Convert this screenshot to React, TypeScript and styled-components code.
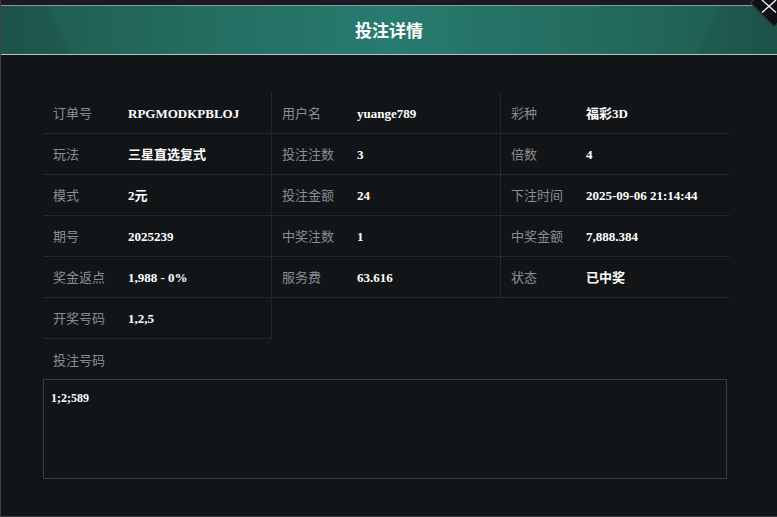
import * as React from "react";
import styled, { createGlobalStyle } from "styled-components";

const GlobalStyle = createGlobalStyle`
  html, body {
    margin: 0;
    padding: 0;
    background: #121518;
  }
  * {
    box-sizing: border-box;
  }
`;

const Modal = styled.div`
  position: relative;
  width: 777px;
  height: 517px;
  overflow: hidden;
  display: flex;
  flex-direction: column;
  background: #121518;
  border-left: 1px solid #3c4146;
  border-bottom: 1px solid #3c4146;
  font-family: "Noto Sans CJK SC", "Noto Sans", sans-serif;
`;

const TopStrip = styled.div`
  height: 6px;
  background: #1a1923;
  border-bottom: 1px solid #8e9898;
`;

const Header = styled.div`
  position: relative;
  height: 49px;
  display: flex;
  align-items: center;
  justify-content: center;
  border-bottom: 1px solid #b9c4c3;
  background: linear-gradient(90deg, #1f594e 0%, #236a5e 22%, #287b6f 50%, #236a5e 78%, #1f594e 100%);

  &::before,
  &::after {
    content: "";
    position: absolute;
    top: 0;
    bottom: 0;
    width: 90px;
    background: rgba(0, 0, 0, 0.06);
  }

  &::before {
    left: 0;
    clip-path: polygon(0 0, 45px 0, 70px 100%, 0 100%);
  }

  &::after {
    right: 0;
    clip-path: polygon(100% 0, 33px 0, 10px 100%, 100% 100%);
  }
`;

const Title = styled.h1`
  position: relative;
  z-index: 1;
  margin: 0 0 2px;
  color: #ffffff;
  font-size: 17px;
  font-weight: 700;
`;

const CloseButton = styled.div`
  position: absolute;
  top: -14px;
  right: -14px;
  width: 34px;
  height: 34px;
  background: #0e0f12;
  border: 1px solid #3a3f44;
  transform: rotate(45deg);
`;

const CloseIcon = styled.svg`
  position: absolute;
  top: 0;
  right: 0;
  width: 16px;
  height: 13px;
`;

const Body = styled.div`
  padding: 38px 46px 0 42px;
  display: flex;
  flex-direction: column;
`;

const Grid = styled.div`
  display: grid;
  grid-template-columns: repeat(3, 229px);
`;

const Cell = styled.div<{ $last?: boolean }>`
  height: 41px;
  display: flex;
  align-items: baseline;
  line-height: 40px;
  padding-left: 10px;
  border-bottom: 1px dotted #34393d;
  border-right: ${(p) => (p.$last ? "none" : "1px dotted #34393d")};
`;

const Label = styled.span`
  width: 75px;
  flex-shrink: 0;
  color: #8b8e91;
  font-size: 13px;
`;

const Value = styled.span`
  color: #ffffff;
  font-family: "Liberation Serif", "Noto Sans CJK SC", serif;
  font-weight: 700;
  font-size: 13px;
`;

const NumbersLabel = styled.div`
  height: 40px;
  display: flex;
  align-items: center;
  padding-left: 10px;
  color: #8b8e91;
  font-size: 13px;
`;

const NumbersBox = styled.div`
  width: 684px;
  height: 100px;
  border: 1px solid #393d41;
  padding: 11px 7px;
  color: #ffffff;
  font-family: "Liberation Serif", serif;
  font-weight: 700;
  font-size: 12px;
`;

const rows: [string, string][] = [
  ["订单号", "RPGMODKPBLOJ"],
  ["用户名", "yuange789"],
  ["彩种", "福彩3D"],
  ["玩法", "三星直选复式"],
  ["投注注数", "3"],
  ["倍数", "4"],
  ["模式", "2元"],
  ["投注金额", "24"],
  ["下注时间", "2025-09-06 21:14:44"],
  ["期号", "2025239"],
  ["中奖注数", "1"],
  ["中奖金额", "7,888.384"],
  ["奖金返点", "1,988 - 0%"],
  ["服务费", "63.616"],
  ["状态", "已中奖"],
  ["开奖号码", "1,2,5"],
];

const App = () => (
  <Modal>
    <GlobalStyle />
    <TopStrip />
    <Header>
      <Title>投注详情</Title>
    </Header>
    <CloseButton />
    <CloseIcon viewBox="0 0 16 13">
      <path d="M1 0 L15 12.5 M1 12.5 L15 0" stroke="#ffffff" strokeWidth="1.3" fill="none" />
    </CloseIcon>
    <Body>
      <Grid>
        {rows.map(([label, value], i) => (
          <Cell key={label} $last={i % 3 === 2}>
            <Label>{label}</Label>
            <Value>{value}</Value>
          </Cell>
        ))}
      </Grid>
      <NumbersLabel>投注号码</NumbersLabel>
      <NumbersBox>1;2;589</NumbersBox>
    </Body>
  </Modal>
);

export default App;
